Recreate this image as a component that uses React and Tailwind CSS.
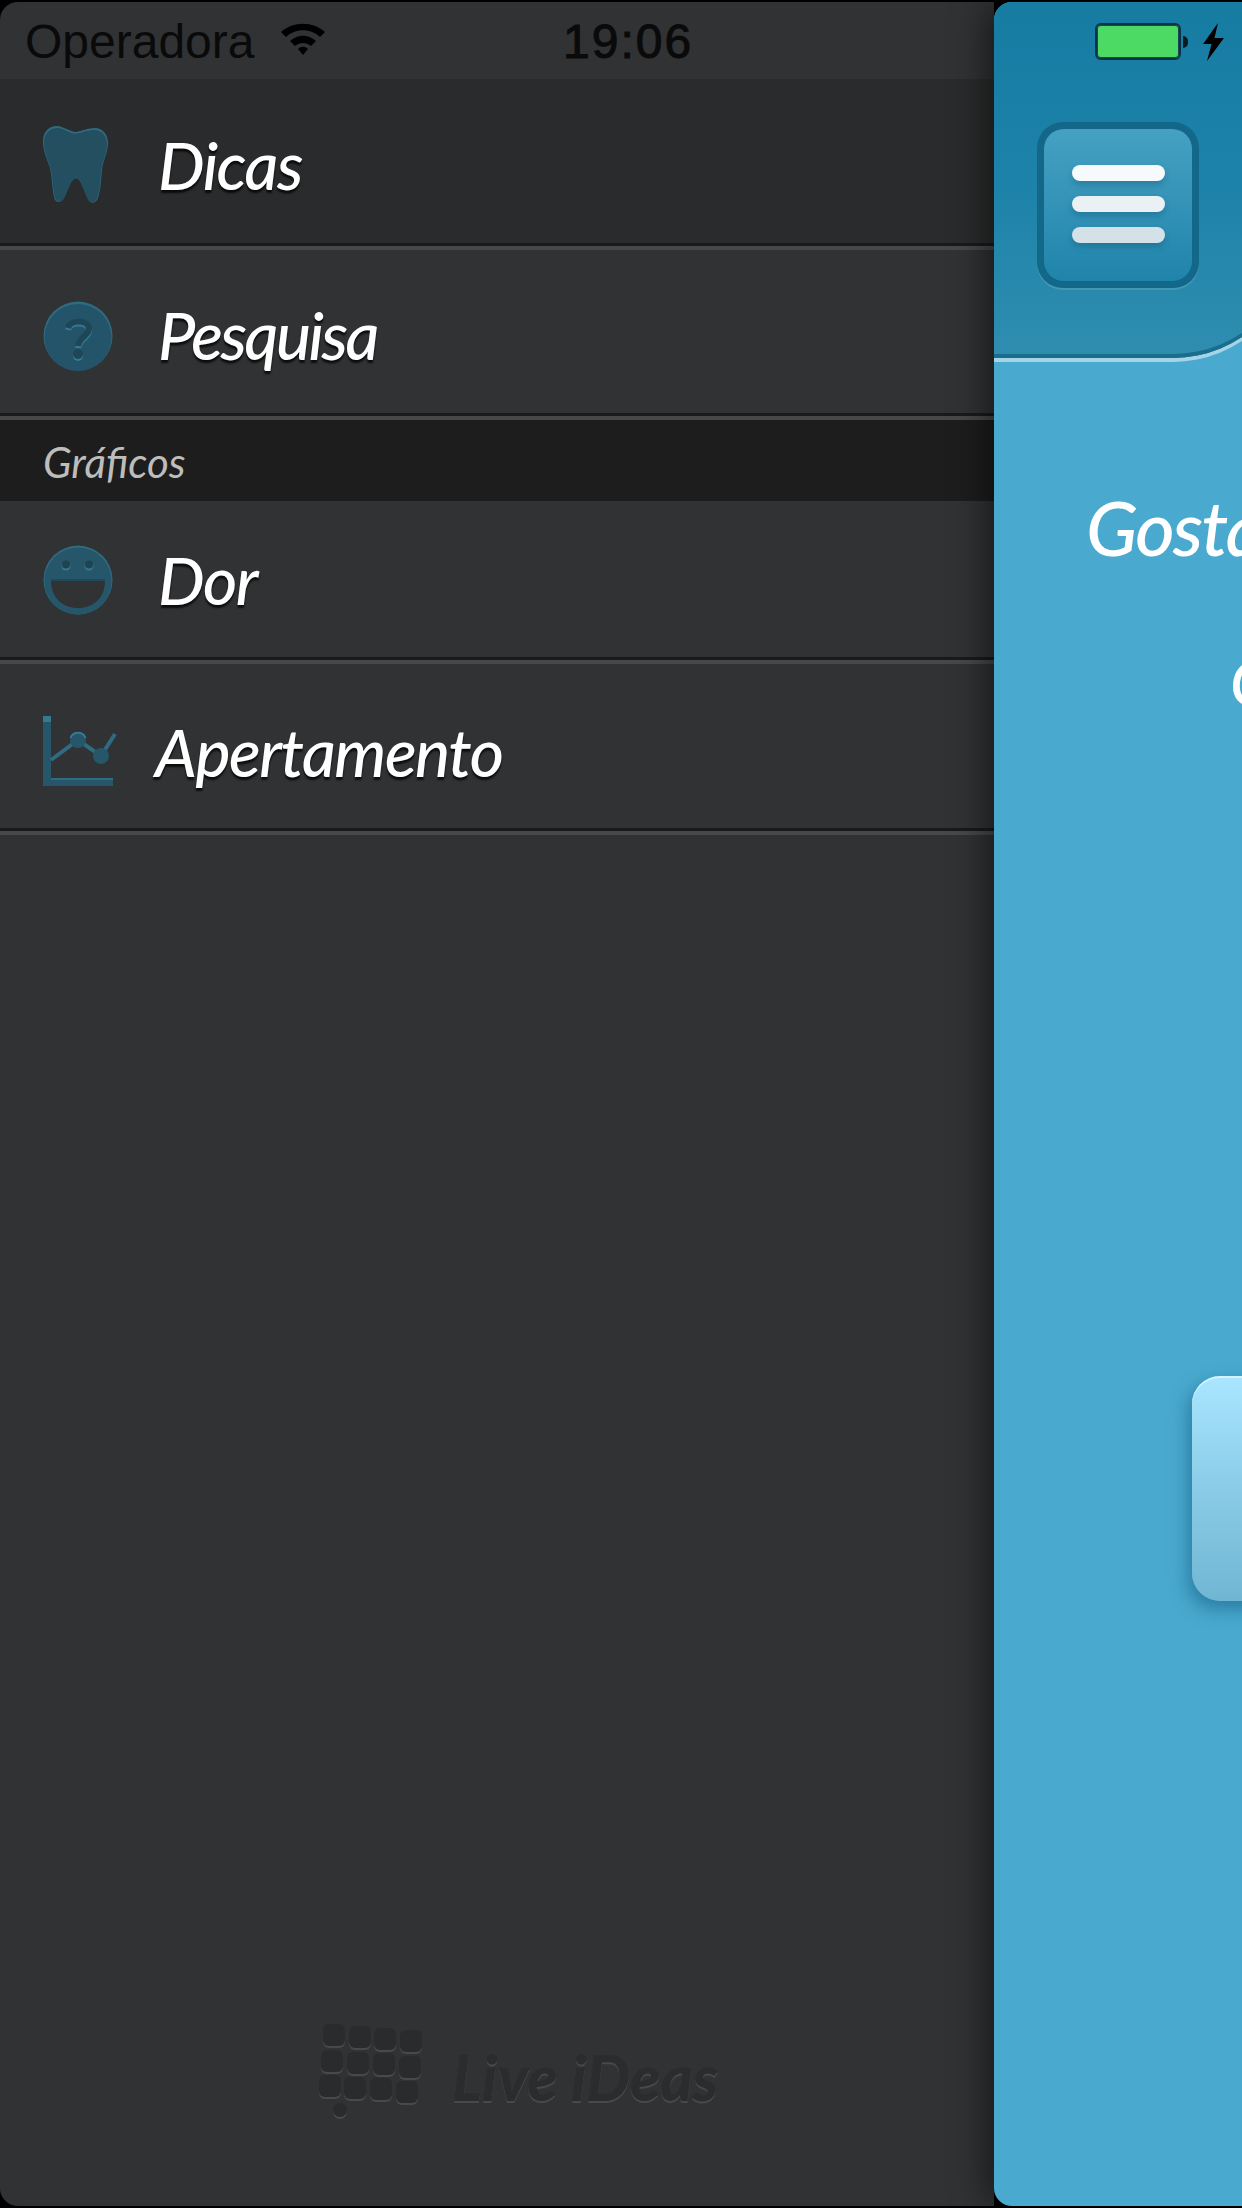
const rowText = "font-['Lato',sans-serif] italic font-medium text-[66px] leading-none text-white [text-shadow:0_3px_2px_rgba(0,0,0,0.75)]";

function Separator() {
  return (
    <div className="shrink-0">
      <div className="h-[3px] bg-[#191a1b]" />
      <div className="h-[4px] bg-[#47484a]" />
    </div>
  );
}

function Tooth() {
  const d = "M14 0C20 0 27 6 33 6C39 5 45 2 52 2C60 2 65 9 65 17C65 27 60 34 59 44C58 54 58 62 55 72C53 78 47 78 45 73C41 65 38 52 33 52C28 52 25 64 21 72C18 78 12 77 11 71C9 61 9 50 7 42C4 33 0 25 0 15C0 6 6 0 14 0Z";
  return (
    <svg width="66" height="78" viewBox="0 0 66 78" className="mt-[2px]">
      <path d={d} fill="#2f6b81" />
      <path d={d} fill="#234f60" transform="translate(1 2) scale(0.97)" />
    </svg>
  );
}

function Help() {
  return (
    <svg width="70" height="70" viewBox="0 0 70 70" className="mt-[2px]">
      <circle cx="35" cy="35" r="34.5" fill="#2f6b81" />
      <circle cx="35" cy="36.5" r="33.5" fill="#24546a" />
      <path d="M25 27C27 19 44 18 46 27C47 34 36 36 35 45" fill="none" stroke="#347a93" strokeWidth="6" transform="translate(0 2)" />
      <path d="M25 27C27 19 44 18 46 27C47 34 36 36 35 45" fill="none" stroke="#1e4656" strokeWidth="6" />
      <circle cx="35" cy="55" r="5" fill="#347a93" />
      <circle cx="35" cy="53" r="5" fill="#1e4656" />
    </svg>
  );
}

function Smile() {
  return (
    <svg width="70" height="70" viewBox="0 0 70 70">
      <circle cx="35" cy="35" r="34.5" fill="#2f6b81" />
      <circle cx="35" cy="36" r="33.5" fill="#25566a" />
      <path d="M8 36H62C62 53 50 63 35 63C20 63 8 53 8 36Z" fill="#303234" />
      <path d="M8 34H62V36H8Z" fill="#1f4858" />
      <circle cx="23" cy="21" r="4.5" fill="#347a93" />
      <circle cx="23" cy="19.5" r="4" fill="#1e4351" />
      <circle cx="46" cy="21" r="4.5" fill="#347a93" />
      <circle cx="46" cy="19.5" r="4" fill="#1e4351" />
    </svg>
  );
}

function Chart() {
  return (
    <svg width="75" height="71" viewBox="0 0 75 71" className="mt-[4px]">
      <path d="M0 0H8V6H0Z" fill="#347a93" />
      <path d="M0 6H8V62H70V70H0Z" fill="#25566a" />
      <path d="M8 62H70V64H8Z" fill="#2f6b81" />
      <path d="M8 44L35 24L58 40L72 18" fill="none" stroke="#2f6b81" strokeWidth="4" />
      <circle cx="35" cy="24" r="8" fill="#25566a" />
      <path d="M27.5 22A8 8 0 0 1 42.5 22" fill="none" stroke="#347a93" strokeWidth="2" />
      <circle cx="58" cy="40" r="8" fill="#25566a" />
    </svg>
  );
}

function MenuRow({ icon, label, className, textClass }) {
  return (
    <div className={`flex items-center ${className}`}>
      <div className="w-[158px] pl-[43px] shrink-0 flex items-center">{icon}</div>
      <span className={`${rowText} ${textClass}`}>{label}</span>
    </div>
  );
}

function Logo() {
  const rows = [
    [[33, 24], [59, 26], [84, 28], [110, 30]],
    [[31, 50], [57, 52], [83, 53], [109, 56]],
    [[29, 75], [54, 77], [80, 78], [106, 81]],
  ];
  return (
    <svg width="110" height="100" viewBox="28 22 110 100" className="shrink-0">
      {rows.flat().map(([x, y], i) => (
        <g key={i}>
          <rect x={x} y={y + 2} width="22" height="22" rx="6" fill="#48494b" />
          <rect x={x} y={y} width="22" height="22" rx="6" fill="#2a2b2c" />
        </g>
      ))}
      <circle cx="50" cy="112" r="7" fill="#48494b" />
      <circle cx="50" cy="110" r="7" fill="#2a2b2c" />
    </svg>
  );
}

function Battery() {
  return (
    <div className="flex items-center">
      <div className="w-[86px] h-[37px] rounded-[6px] border-[2px] border-[#0b3445] bg-[#4cd964] shadow-[inset_0_0_0_1px_#17485a]" />
      <div className="w-[5px] h-[12px] ml-[2px] rounded-r-full bg-[#0b1c25]" />
    </div>
  );
}

function Bolt() {
  return (
    <svg width="21" height="38" viewBox="0 0 21 38">
      <path d="M15 0L0 21H8.5L4 38L21 15H11.5Z" fill="#000" />
    </svg>
  );
}

export default function App() {
  return (
    <div className="w-[1242px] h-[2208px] bg-black py-[2px] overflow-hidden">
      <div className="flex h-full">
        {/* menu lateral */}
        <div className="w-[994px] shrink-0 flex flex-col bg-[#303234] rounded-tl-[18px] rounded-bl-[18px] overflow-hidden">
          <div className="h-[77px] shrink-0 flex items-center pl-[25px] pt-[3px] font-['Liberation_Sans',sans-serif] text-[48px] leading-none text-[#0a0a0a]">
            <span className="w-[255px]">Operadora</span>
            <svg width="46" height="35" viewBox="0 0 46 35" className="shrink-0 -mt-[8px]">
              <path d="M1 11C13 0 33 0 45 11L40 16C31 7 15 7 6 16Z" fill="#000" />
              <path d="M10 20C18 13 28 13 36 20L31 25C26 21 20 21 15 25Z" fill="#000" />
              <path d="M18 28C21 25 25 25 28 28L23 34Z" fill="#000" />
            </svg>
            <span className="ml-[237px] tracking-[2px] [-webkit-text-stroke:1px_#0a0a0a]">19:06</span>
          </div>

          <MenuRow className="h-[164px] shrink-0 pt-[6px] bg-[#2a2b2c]" icon={<Tooth />} label="Dicas" textClass="tracking-[-1.5px] pt-[2px]" />
          <Separator />
          <MenuRow className="h-[163px] shrink-0 pt-[6px]" icon={<Help />} label="Pesquisa" textClass="tracking-[-2.5px]" />
          <Separator />

          <div className="h-[81px] shrink-0 bg-[#1d1d1d] flex items-center pl-[43px] pt-[3px]">
            <span className="font-['Lato',sans-serif] italic text-[42px] leading-none text-[#bdbdbd]">Gráficos</span>
          </div>

          <MenuRow className="h-[156px] shrink-0 pt-[2px]" icon={<Smile />} label="Dor" textClass="tracking-[-1.5px]" />
          <Separator />
          <MenuRow className="h-[164px] shrink-0 pt-[6px]" icon={<Chart />} label="Apertamento" textClass="tracking-[-1.5px] -ml-[3px] pt-[5px]" />
          <Separator />

          <div className="mt-auto pb-[84px] pl-[318px] flex items-center gap-[24px]">
            <Logo />
            <span className="pt-[10px] font-['Lato',sans-serif] italic font-black text-[62px] leading-none text-[#2b2c2d] [text-shadow:0_2px_0_#48494b]">Live iDeas</span>
          </div>
        </div>

        {/* tela principal, cortada pela borda */}
        <div className="relative flex-1 min-w-0 flex flex-col bg-[#4aa9ce] rounded-tl-[18px] rounded-bl-[18px] overflow-hidden shadow-[-6px_0_36px_rgba(0,0,0,0.55)]">
          <div className="w-[303px] h-[356px] shrink-0 rounded-br-[124px] bg-gradient-to-b from-[#167ca2] via-[#1c82a9] to-[#2f8eb0] shadow-[inset_0_-4px_0_#1a6d8c,0_4px_0_rgba(255,255,255,0.5)]">
            <div className="flex items-center pl-[101px] gap-[15px] h-[79px]">
              <Battery />
              <Bolt />
            </div>
            <div className="mt-[41px] ml-[43px] w-[162px] h-[166px] rounded-[26px] p-[7px] bg-[#13688a] shadow-[0_2px_0_rgba(255,255,255,0.12)]">
              <div className="w-full h-full rounded-[20px] bg-gradient-to-b from-[#45a1c3] to-[#1f84ab] flex flex-col items-center justify-center gap-[15px] pb-[2px]">
                <div className="w-[93px] h-[16px] rounded-full bg-[#f7fafc] shadow-[0_4px_6px_rgba(0,60,90,0.25)]" />
                <div className="w-[93px] h-[16px] rounded-full bg-[#e9f1f4] shadow-[0_4px_6px_rgba(0,60,90,0.25)]" />
                <div className="w-[93px] h-[16px] rounded-full bg-[#d4e2e8] shadow-[0_4px_6px_rgba(0,60,90,0.25)]" />
              </div>
            </div>
          </div>

          <div className="mt-[131px] pl-[92px] font-['Lato',sans-serif] italic font-medium text-[76px] leading-none tracking-[-2px] text-white whitespace-nowrap">Gosta</div>
          <div className="mt-[85px] pl-[236px] font-['Lato',sans-serif] italic font-medium text-[64px] leading-none text-white whitespace-nowrap">G</div>

          <div className="mt-[662px] ml-[198px] w-[200px] h-[225px] shrink-0 rounded-[28px] bg-gradient-to-b from-[#aae6ff] via-[#8accE8] to-[#70b6d3] shadow-[inset_0_2px_0_rgba(255,255,255,0.5),-4px_8px_18px_rgba(15,90,130,0.55)]" />
        </div>
      </div>
    </div>
  );
}
